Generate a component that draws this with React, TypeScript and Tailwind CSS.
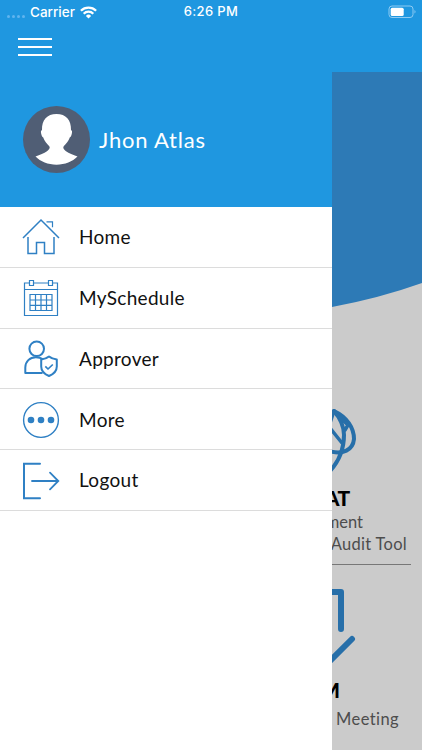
import type { ReactNode } from 'react';

// ============================================
// Icons
// ============================================

const iconProps = {
  width: 36,
  height: 36,
  viewBox: '0 0 36 36',
  fill: 'none',
  stroke: '#2f80c4',
  className: 'shrink-0 overflow-visible',
};

function HomeIcon() {
  return (
    <svg {...iconProps} strokeWidth="1.5">
      <path d="M0 19 18 1l18 18" />
      <path d="M5 18v16.5h8.5V23.5h8v11H31V18" />
      <path d="M23.5 2.8h6v5.5" strokeWidth="1.2" />
    </svg>
  );
}

function ScheduleIcon() {
  return (
    <svg {...iconProps} strokeWidth="1.2">
      <path d="M6.5 3H1.5v32.500h33V3h-5M10.500 3h15M1.500 9.500h33" />
      <path d="M6.500.500h4v5h-4zM25.500.500h4v5h-4z" />
      <path d="M7 14.500h22v16H7zM12.500 14.500v16M18 14.500v16M23.500 14.500v16M7 20h22M7 25.300h22" />
    </svg>
  );
}

function ApproverIcon() {
  return (
    <svg {...iconProps} strokeWidth="2" strokeLinejoin="round">
      <circle cx="13.7" cy="7.8" r="7.3" />
      <path d="M19.5 32H2.3v-5.5c0-6 4.5-10.3 10.5-10.3 3 0 5.5.8 7 2.3" />
      <path d="M26 15.5c2 1.7 4.5 2.7 7.8 3v7c0 4.3-3 7.5-7.8 9.5-4.8-2-7.800-5.200-7.800-9.500v-7c3.300-.300 5.800-1.300 7.800-3z" />
      <path d="m22.3 25.3 2.7 2.7 4.8-4.5" strokeWidth="1.7" />
    </svg>
  );
}

function MoreIcon() {
  return (
    <svg {...iconProps}>
      <circle cx="18" cy="18" r="17.4" strokeWidth="1.4" />
      <g fill="#2f80c4" stroke="none">
        <circle cx="8" cy="18" r="3.3" />
        <circle cx="18" cy="18" r="3.3" />
        <circle cx="28" cy="18" r="3.3" />
      </g>
    </svg>
  );
}

function LogoutIcon() {
  return (
    <svg {...iconProps} strokeWidth="2" strokeLinecap="round">
      <path d="M17 .8H1v34.4h16" />
      <path d="M9 18h26M27 9.7 35.3 18 27 26.3" strokeWidth="1.8" />
    </svg>
  );
}

// ============================================
// Status Bar + Navigation
// ============================================

function StatusBar() {
  return (
    <div className="grid h-6 grid-cols-3 items-center pl-[7px] pr-[6px] text-[13px] font-medium text-white">
      <div className="flex items-center">
        <div className="mt-2 flex gap-[2px]">
          {[0, 1, 2, 3].map((dot) => (
            <span key={dot} className="size-[3px] rounded-full bg-[#61b4ee]" />
          ))}
        </div>
        <span className="ml-[5px] text-[13.5px] leading-4">Carrier</span>
        <svg width="17" height="13" viewBox="0 0 17 13" fill="none" stroke="white" strokeWidth="2.3" className="ml-[5px]">
          <path d="M.9 4.7a10.8 10.8 0 0 1 15.2 0M3.7 7.7a6.8 6.8 0 0 1 9.6 0" />
          <path d="M8.5 12.5 5.9 9.900a3.700 3.700 0 0 1 5.200 0z" fill="white" stroke="none" />
        </svg>
      </div>
      <span className="-ml-px text-center tracking-[0.35px]">6:26 PM</span>
      <svg width="28" height="14" viewBox="0 0 28 14" fill="none" className="justify-self-end">
        <rect x="1" y="1" width="24" height="11.5" rx="3" stroke="#8ecbf3" />
        <rect x="2.7" y="2.7" width="13" height="8.2" rx="1.5" fill="white" />
        <path d="M26.5 5v3.5q1-.5 1-1.7T26.5 5z" fill="#8ecbf3" />
      </svg>
    </div>
  );
}

function NavBar() {
  return (
    <header className="h-[72px] shrink-0 bg-[#1f97e0] font-[Inter,sans-serif]">
      <StatusBar />
      <button type="button" aria-label="Menu" className="ml-[18px] mt-[14px] flex flex-col gap-[6px]">
        <span className="h-[2px] w-[34px] bg-white" />
        <span className="h-[2px] w-[34px] bg-white" />
        <span className="h-[2px] w-[34px] bg-white" />
      </button>
    </header>
  );
}

// ============================================
// Drawer
// ============================================

function Profile() {
  return (
    <div className="flex h-[135px] items-center bg-[#1f97e0] pl-[23px]">
      <svg width="67" height="67" viewBox="0 0 67 67">
        <circle cx="33.5" cy="33.5" r="33.5" fill="#505e75" />
        <path
          d="M33.5 8C43 8 48.3 14 48 24c1.5.5 1.2 2.5.6 4.5-.4 1.5-.8 2.5-1.7 2.8-1.5 3.800-3.600 6.500-6.200 9-1.200 1.600.300 3.500 2.300 5 3 2.200 7 3.700 11.500 5.200-5 5-12.500 8.200-21 8.200s-16-3.200-21-8.200c4.500-1.500 8.500-3 11.500-5.200 2-1.500 3.500-3.400 2.300-5-2.600-2.500-4.700-5.200-6.200-9-.9-.3-1.300-1.300-1.700-2.800-.6-2-.9-4 .6-4.500C18.700 14 24 8 33.500 8z"
          fill="white"
        />
      </svg>
      <span className="ml-[9px] text-[22px] tracking-[0.8px] text-white">Jhon Atlas</span>
    </div>
  );
}

interface MenuItem {
  label: string;
  icon: ReactNode;
}

const menuItems: MenuItem[] = [
  { label: 'Home', icon: <HomeIcon /> },
  { label: 'MySchedule', icon: <ScheduleIcon /> },
  { label: 'Approver', icon: <ApproverIcon /> },
  { label: 'More', icon: <MoreIcon /> },
  { label: 'Logout', icon: <LogoutIcon /> },
];

function Drawer() {
  return (
    <aside className="w-[332px] shrink-0 bg-white">
      <Profile />
      <nav>
        {menuItems.map((item) => (
          <a
            key={item.label}
            className="flex h-[60.8px] items-center gap-[20px] border-b border-[#dcdcdc] pl-[23px] pt-px text-[19px] tracking-[0.3px] text-[#111]"
          >
            {item.icon}
            <span>{item.label}</span>
          </a>
        ))}
      </nav>
    </aside>
  );
}

// ============================================
// Dimmed page behind the drawer
// ============================================

function Backdrop() {
  return (
    <main className="flex min-w-0 flex-1 flex-col overflow-hidden whitespace-nowrap bg-[#cbcbcb] text-[16.5px] leading-[22px] text-[#4d4d4d]">
      <svg width="90" height="236" viewBox="0 0 90 236" className="shrink-0">
        <path d="M0 0h90v211Q48 226 0 235z" fill="#2d7ab6" />
      </svg>

      <section className="flex h-[177px] shrink-0 flex-col">
        <svg
          width="90"
          height="66"
          viewBox="0 0 90 66"
          fill="none"
          stroke="#276fa9"
          strokeWidth="4"
          strokeLinecap="round"
          strokeLinejoin="round"
          className="mt-[99px] shrink-0"
        >
          <path d="M2 4C15 10 22 21 22 32 21 43 11 48-3 44" />
          <path d="M2 4c6 7 10 16 10 24 0 14-4 25-14 36" />
          <path d="M-2 16 2 4M-2 21 10 36M5 8l11 10-3 5" strokeWidth="3.5" />
        </svg>
      </section>

      <section className="flex shrink-0 flex-col">
        <h2 className="flex w-[18px] justify-end text-[21px] font-black leading-[26px] tracking-[-0.3px] text-black">AT</h2>
        <p className="flex w-[31px] justify-end">ment</p>
        <p className="flex w-[75px] justify-end tracking-[0.3px]">Audit Tool</p>
        <hr className="mt-[9px] w-[79px] border-[#777]" />
      </section>

      <section className="flex flex-col">
        <svg
          width="90"
          height="88"
          viewBox="0 0 90 88"
          fill="none"
          stroke="#276fa9"
          strokeWidth="6"
          strokeLinecap="round"
          strokeLinejoin="round"
          className="mt-[20px] shrink-0"
        >
          <path d="M-10 7H9v37M20 54-2 76" />
        </svg>
        <h2 className="mt-[4px] flex w-[8px] justify-end text-[21px] font-black leading-[25px] text-black">M</h2>
        <p className="mt-[6px] flex w-[67px] justify-end tracking-[0.4px]">Meeting</p>
      </section>
    </main>
  );
}

export default function App() {
  return (
    <div className="flex h-[750px] w-[422px] flex-col overflow-hidden font-[Lato,sans-serif]">
      <NavBar />
      <div className="flex min-h-0 flex-1">
        <Drawer />
        <Backdrop />
      </div>
    </div>
  );
}
